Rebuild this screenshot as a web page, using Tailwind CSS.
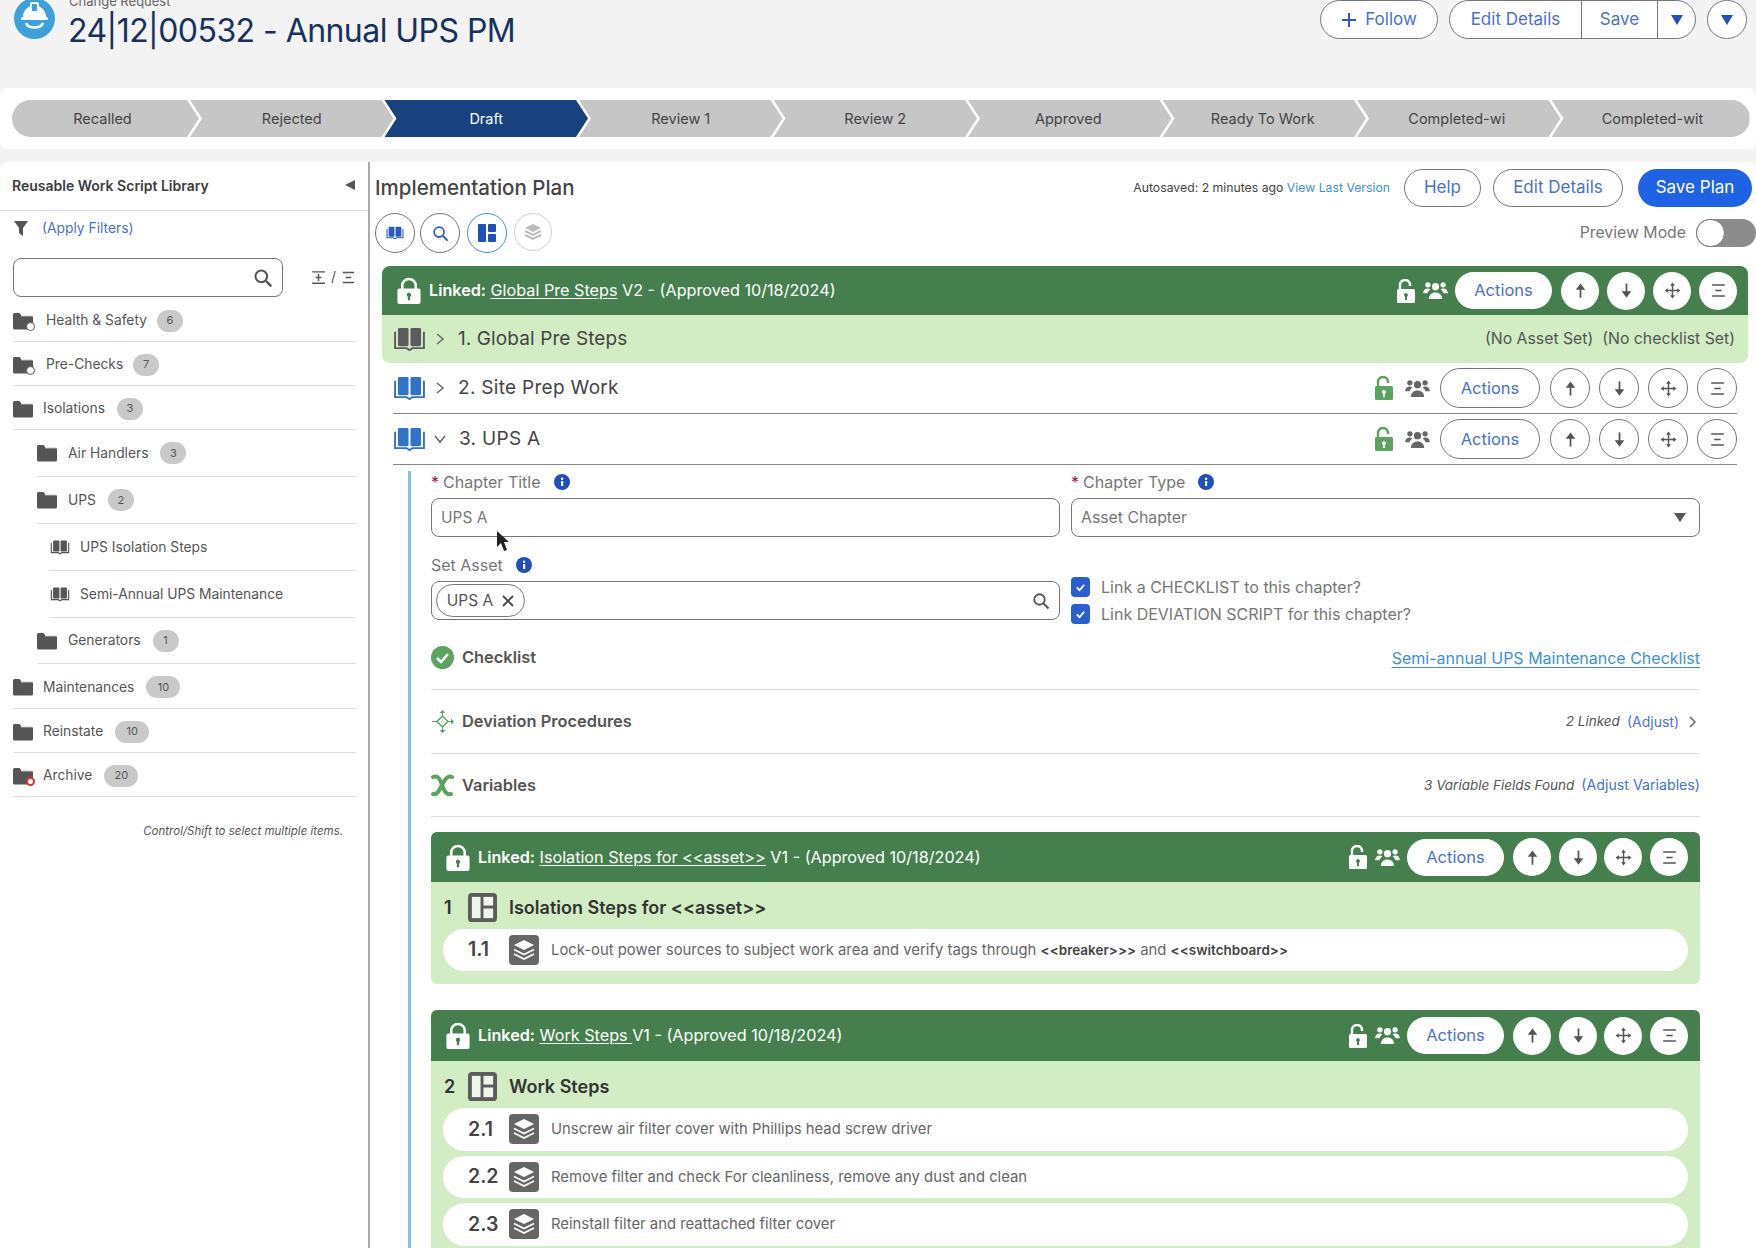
<!DOCTYPE html>
<html lang="en">
  <head>
    <meta charset="UTF-8" />
    <title>24|12|00532 - Annual UPS PM</title>
    <script src="https://cdn.jsdelivr.net/npm/@tailwindcss/browser@4"></script>
  </head>
  <body class="relative w-[1756px] h-[1248px] overflow-hidden bg-[#f3f3f3] font-[Inter,sans-serif] text-[#444]">
    <!-- shared icons -->
    <svg class="hidden">
      <symbol id="book" viewBox="0 0 34 26">
        <rect x="5" y="1" width="11" height="19" rx="1.5" fill="currentColor" />
        <rect x="18" y="1" width="11" height="19" rx="1.5" fill="currentColor" />
        <path d="M2 5v17h12l3 2 3-2h12V5" fill="none" stroke="currentColor" stroke-width="2" />
      </symbol>
      <symbol id="lock" viewBox="0 0 24 28">
        <path d="M5 13V9a7 7 0 0 1 14 0v4" fill="none" stroke="currentColor" stroke-width="2.600" />
        <path fill-rule="evenodd" fill="currentColor" d="M2 12h20a2 2 0 0 1 2 2v12a2 2 0 0 1-2 2H2a2 2 0 0 1-2-2V14a2 2 0 0 1 2-2zM12 16a2.400 2.400 0 0 0-1.200 4.400V24h2.400v-3.600A2.400 2.400 0 0 0 12 16z" />
      </symbol>
      <symbol id="unlock" viewBox="0 0 18 24">
        <path d="M3 11V6a5 5 0 0 1 10 0v1" fill="none" stroke="currentColor" stroke-width="2.400" />
        <path fill-rule="evenodd" fill="currentColor" d="M1.500 10h15a1.500 1.500 0 0 1 1.500 1.500v11a1.500 1.500 0 0 1-1.500 1.500h-15A1.500 1.500 0 0 1 0 22.500v-11A1.500 1.500 0 0 1 1.500 10zM9 14a2 2 0 0 0-1 3.700V21h2v-3.300A2 2 0 0 0 9 14z" />
      </symbol>
      <symbol id="people" viewBox="0 0 26 20">
        <circle cx="13" cy="6" r="3.800" fill="currentColor" />
        <path d="M6 19c0-4.500 3-7 7-7s7 2.500 7 7z" fill="currentColor" />
        <circle cx="5" cy="4" r="2.800" fill="currentColor" />
        <circle cx="21" cy="4" r="2.800" fill="currentColor" />
        <path d="M0 13c0-3 2-5 5-5 1 0 2 .3 2.600 1-1.500 1-2.600 2.300-3 4zM26 13c0-3-2-5-5-5-1 0-2 .3-2.600 1 1.500 1 2.600 2.300 3 4z" fill="currentColor" />
      </symbol>
      <symbol id="up" viewBox="0 0 24 24">
        <path d="M12 21V9" stroke="currentColor" stroke-width="2.200" />
        <path d="M12 3l6 8H6z" fill="currentColor" />
      </symbol>
      <symbol id="down" viewBox="0 0 24 24">
        <path d="M12 3v12" stroke="currentColor" stroke-width="2.200" />
        <path d="M12 21l-6-8h12z" fill="currentColor" />
      </symbol>
      <symbol id="move" viewBox="0 0 24 24">
        <path d="M12 4v16M4 12h16" stroke="currentColor" stroke-width="1.800" />
        <path d="M12 2l3 4H9zM12 22l-3-4h6zM2 12l4-3v6zM22 12l-4 3V9z" fill="currentColor" />
      </symbol>
      <symbol id="center" viewBox="0 0 24 24">
        <path d="M4 5h16M8 12h8M4 19h16" fill="none" stroke="currentColor" stroke-width="2" />
      </symbol>
      <symbol id="expand" viewBox="0 0 24 24">
        <path d="M3 4h18M3 20h18M8 12h8M12 7v10" fill="none" stroke="currentColor" stroke-width="2" />
      </symbol>
      <symbol id="search" viewBox="0 0 24 24">
        <circle cx="10" cy="10" r="7" fill="none" stroke="currentColor" stroke-width="2.400" />
        <path d="M15.500 15.500L22 22" stroke="currentColor" stroke-width="2.800" />
      </symbol>
      <symbol id="folder" viewBox="0 0 20 18">
        <path d="M1.500 1h5l2 2.500h10a1.500 1.500 0 0 1 1.500 1.500v11a1.500 1.500 0 0 1-1.500 1.500h-17A1.500 1.500 0 0 1 0 16V2.500A1.500 1.500 0 0 1 1.500 1z" fill="currentColor" />
        <path d="M8 3.800h12" stroke="#fff" stroke-width="1" />
      </symbol>
      <symbol id="info" viewBox="0 0 16 16">
        <circle cx="8" cy="8" r="8" fill="#1f4fb8" />
        <rect x="7" y="7" width="2.200" height="5" fill="#fff" />
        <circle cx="8.100" cy="4.800" r="1.200" fill="#fff" />
      </symbol>
      <symbol id="section" viewBox="0 0 30 30">
        <rect x="0" y="0" width="30" height="30" rx="4" fill="#5c5c5c" />
        <rect x="4" y="4" width="9" height="22" fill="#eef6e9" />
        <rect x="16" y="4" width="10" height="9" fill="#eef6e9" />
        <rect x="16" y="16" width="10" height="10" fill="#eef6e9" />
      </symbol>
      <symbol id="stack" viewBox="0 0 30 30">
        <rect x="0" y="0" width="30" height="30" rx="4" fill="#666" />
        <path d="M15 5l10 5-10 5-10-5z" fill="#fff" />
        <path d="M5 14.500l10 5 10-5M5 19l10 5 10-5" fill="none" stroke="#fff" stroke-width="1.800" />
      </symbol>
    </svg>

    <!-- record header -->
    <header class="h-[88px] flex justify-between pl-[14px] pr-[9px]">
      <div class="flex gap-[14px]">
        <svg class="w-[41px] h-[41px] -mt-[2px] shrink-0" viewBox="0 0 41 41">
          <circle cx="20.500" cy="20.500" r="20.500" fill="#3ca0db" />
          <path d="M9 19a11.500 11.500 0 0 1 23 0z" fill="#fff" />
          <rect x="17" y="5" width="7" height="9" rx="1" fill="#3ca0db" stroke="#fff" stroke-width="2" />
          <rect x="7" y="19" width="27" height="3" rx="1.500" fill="#fff" />
          <path d="M12 25c2 6 15 6 17 0" fill="none" stroke="#fff" stroke-width="2.500" />
        </svg>
        <div class="-mt-[8px]">
          <p class="text-[13px] leading-[18px] text-[#666]">Change Request</p>
          <h1 class="text-[32px] leading-[40px] mt-[1px] -ml-[1px] text-[#16325c] tracking-[-0.55px]">24|12|00532 - Annual UPS PM</h1>
        </div>
      </div>
      <div class="flex gap-[11px] text-[17px] text-[#4a72c8]">
        <button class="w-[118px] h-[39px] rounded-full border border-[#777] bg-white flex items-center justify-center gap-[8px]">
          <svg class="w-[16px] h-[16px]" viewBox="0 0 16 16"><path d="M8 1v14M1 8h14" stroke="#2a5bc2" stroke-width="2" /></svg>
          Follow
        </button>
        <div class="w-[247px] h-[39px] rounded-full border border-[#777] bg-white flex items-center overflow-hidden">
          <span class="w-[131px] text-center">Edit Details</span>
          <span class="w-[77px] h-full flex items-center justify-center border-x border-[#777]">Save</span>
          <span class="flex-1 flex justify-center"><svg class="w-[12px] h-[10px]" viewBox="0 0 12 10"><path d="M0 0h12L6 10z" fill="#1f4fb8" /></svg></span>
        </div>
        <button class="w-[40px] h-[39px] rounded-full border border-[#777] bg-white flex items-center justify-center">
          <svg class="w-[12px] h-[10px]" viewBox="0 0 12 10"><path d="M0 0h12L6 10z" fill="#1f4fb8" /></svg>
        </button>
      </div>
    </header>

    <!-- path -->
    <nav class="h-[61px] bg-white rounded-lg pl-[12px] pt-[12px] flex text-[14.5px]">
      <div class="w-[187px] h-[37px] pr-[6px] flex items-center justify-center bg-[#c6c6c6] rounded-l-full [clip-path:polygon(0_0,calc(100%-12px)_0,100%_50%,calc(100%-12px)_100%,0_100%)]">Recalled</div>
      <div class="w-[203.500px] -ml-[9px] h-[37px] flex items-center justify-center bg-[#c6c6c6] [clip-path:polygon(0_0,calc(100%-12px)_0,100%_50%,calc(100%-12px)_100%,0_100%,12px_50%)]">Rejected</div>
      <div class="w-[203.500px] -ml-[9px] h-[37px] flex items-center justify-center bg-[#17427f] text-white [clip-path:polygon(0_0,calc(100%-12px)_0,100%_50%,calc(100%-12px)_100%,0_100%,12px_50%)]">Draft</div>
      <div class="w-[203.500px] -ml-[9px] h-[37px] flex items-center justify-center bg-[#c6c6c6] [clip-path:polygon(0_0,calc(100%-12px)_0,100%_50%,calc(100%-12px)_100%,0_100%,12px_50%)]">Review 1</div>
      <div class="w-[203.500px] -ml-[9px] h-[37px] flex items-center justify-center bg-[#c6c6c6] [clip-path:polygon(0_0,calc(100%-12px)_0,100%_50%,calc(100%-12px)_100%,0_100%,12px_50%)]">Review 2</div>
      <div class="w-[203.500px] -ml-[9px] h-[37px] pr-[3px] flex items-center justify-center bg-[#c6c6c6] [clip-path:polygon(0_0,calc(100%-12px)_0,100%_50%,calc(100%-12px)_100%,0_100%,12px_50%)]">Approved</div>
      <div class="w-[203.500px] -ml-[9px] h-[37px] pr-[3px] flex items-center justify-center bg-[#c6c6c6] [clip-path:polygon(0_0,calc(100%-12px)_0,100%_50%,calc(100%-12px)_100%,0_100%,12px_50%)]">Ready To Work</div>
      <div class="w-[203.500px] -ml-[9px] h-[37px] pr-[4px] flex items-center justify-center bg-[#c6c6c6] [clip-path:polygon(0_0,calc(100%-12px)_0,100%_50%,calc(100%-12px)_100%,0_100%,12px_50%)]">Completed-wi</div>
      <div class="w-[198px] -ml-[9px] h-[37px] pl-[4px] flex items-center justify-center bg-[#c6c6c6] rounded-r-full [clip-path:polygon(0_0,100%_0,100%_100%,0_100%,12px_50%)]">Completed-wit</div>
    </nav>

    <main class="mt-[13px] h-[1086px] bg-white rounded-t-lg flex">
      <!-- library sidebar -->
      <aside class="w-[370px] shrink-0 border-r-2 border-[#aaa] text-[13.8px]">
        <div class="h-[49px] pb-[2px] flex items-center justify-between pl-[12px] pr-[13px] border-b border-[#ddd]">
          <h2 class="text-[14px] font-semibold text-[#3d3d3d]">Reusable Work Script Library</h2>
          <svg class="w-[10px] h-[10px]" viewBox="0 0 10 10"><path d="M10 0v10L0 5z" fill="#555" /></svg>
        </div>
        <div class="h-[34px] flex items-center pl-[13px] gap-[13px]">
          <svg class="w-[16px] h-[15px]" viewBox="0 0 14 15"><path d="M0 0h14L9 7v8L5 12V7z" fill="#555" /></svg>
          <span class="text-[#4a72c8]">(Apply Filters)</span>
        </div>
        <div class="mt-[13px] pl-[13px] pr-[11px] flex items-center justify-between">
          <div class="w-[270px] h-[39px] rounded-lg border border-[#777] flex items-center justify-end pr-[9px]">
            <svg class="w-[20px] h-[20px] text-[#555]"><use href="#search" /></svg>
          </div>
          <div class="flex items-center gap-[4px] text-[#555]">
            <svg class="w-[17px] h-[17px]"><use href="#expand" /></svg>
            <span>/</span>
            <svg class="w-[17px] h-[17px]"><use href="#center" /></svg>
          </div>
        </div>

        <ul class="mt-px text-[#555]">
          <li class="h-[44px] pt-[2px] ml-[13px] mr-[12px] border-b border-[#ddd] flex items-center">
            <span class="relative w-[20px] h-[18px] text-[#555]"><svg class="w-[20px] h-[18px]"><use href="#folder" /></svg><span class="absolute -right-[2px] -bottom-[1px] w-[9px] h-[9px] rounded-full bg-white border border-[#555]"></span></span>
            <span class="ml-[13px]">Health &amp; Safety</span>
            <span class="ml-[10px] w-[26px] h-[22px] rounded-full bg-[#c9c9c9] text-[11px] flex items-center justify-center">6</span>
          </li>
          <li class="h-[44px] pt-[2px] ml-[13px] mr-[12px] border-b border-[#ddd] flex items-center">
            <span class="relative w-[20px] h-[18px] text-[#555]"><svg class="w-[20px] h-[18px]"><use href="#folder" /></svg><span class="absolute -right-[2px] -bottom-[1px] w-[9px] h-[9px] rounded-full bg-white border border-[#555]"></span></span>
            <span class="ml-[13px]">Pre-Checks</span>
            <span class="ml-[10px] w-[26px] h-[22px] rounded-full bg-[#c9c9c9] text-[11px] flex items-center justify-center">7</span>
          </li>
          <li class="h-[44px] pt-[2px] ml-[13px] mr-[12px] border-b border-[#ddd] flex items-center">
            <svg class="w-[20px] h-[18px] text-[#555]"><use href="#folder" /></svg>
            <span class="ml-[10px]">Isolations</span>
            <span class="ml-[12px] w-[26px] h-[22px] rounded-full bg-[#c9c9c9] text-[11px] flex items-center justify-center">3</span>
          </li>
          <li class="h-[47px] ml-[37px] mr-[12px] border-b border-[#ddd] flex items-center">
            <svg class="w-[20px] h-[18px] text-[#555]"><use href="#folder" /></svg>
            <span class="ml-[11px]">Air Handlers</span>
            <span class="ml-[12px] w-[26px] h-[22px] rounded-full bg-[#c9c9c9] text-[11px] flex items-center justify-center">3</span>
          </li>
          <li class="h-[47px] ml-[37px] mr-[12px] border-b border-[#ddd] flex items-center">
            <svg class="w-[20px] h-[18px] text-[#555]"><use href="#folder" /></svg>
            <span class="ml-[11px]">UPS</span>
            <span class="ml-[12px] w-[26px] h-[22px] rounded-full bg-[#c9c9c9] text-[11px] flex items-center justify-center">2</span>
          </li>
          <li class="h-[47px] ml-[50px] mr-[12px] border-b border-[#ddd] flex items-center">
            <svg class="w-[20px] h-[15px] text-[#555]"><use href="#book" /></svg>
            <span class="ml-[10px]">UPS Isolation Steps</span>
          </li>
          <li class="h-[47px] ml-[50px] mr-[12px] border-b border-[#ddd] flex items-center">
            <svg class="w-[20px] h-[15px] text-[#555]"><use href="#book" /></svg>
            <span class="ml-[10px]">Semi-Annual UPS Maintenance</span>
          </li>
          <li class="h-[46px] ml-[37px] mr-[12px] border-b border-[#ddd] flex items-center">
            <svg class="w-[20px] h-[18px] text-[#555]"><use href="#folder" /></svg>
            <span class="ml-[11px]">Generators</span>
            <span class="ml-[12px] w-[26px] h-[22px] rounded-full bg-[#c9c9c9] text-[11px] flex items-center justify-center">1</span>
          </li>
          <li class="h-[45px] pt-[2px] ml-[13px] mr-[12px] border-b border-[#ddd] flex items-center">
            <svg class="w-[20px] h-[18px] text-[#555]"><use href="#folder" /></svg>
            <span class="ml-[10px]">Maintenances</span>
            <span class="ml-[12px] w-[34px] h-[22px] rounded-full bg-[#c9c9c9] text-[11px] flex items-center justify-center">10</span>
          </li>
          <li class="h-[44px] pt-[2px] ml-[13px] mr-[12px] border-b border-[#ddd] flex items-center">
            <svg class="w-[20px] h-[18px] text-[#555]"><use href="#folder" /></svg>
            <span class="ml-[10px]">Reinstate</span>
            <span class="ml-[12px] w-[34px] h-[22px] rounded-full bg-[#c9c9c9] text-[11px] flex items-center justify-center">10</span>
          </li>
          <li class="h-[44px] pt-[2px] ml-[13px] mr-[12px] border-b border-[#ddd] flex items-center">
            <span class="relative w-[20px] h-[18px] text-[#555]"><svg class="w-[20px] h-[18px]"><use href="#folder" /></svg><span class="absolute -right-[2px] -bottom-[1px] w-[9px] h-[9px] rounded-full bg-white border-2 border-[#d33]"></span></span>
            <span class="ml-[10px]">Archive</span>
            <span class="ml-[12px] w-[34px] h-[22px] rounded-full bg-[#c9c9c9] text-[11px] flex items-center justify-center">20</span>
          </li>
        </ul>
        <p class="mt-[26px] pr-[25px] text-right text-[11.500px] italic text-[#555]">Control/Shift to select multiple items.</p>
      </aside>

      <!-- implementation plan -->
      <section class="flex-1 min-w-0">
        <div class="mt-[7px] h-[38px] pl-[5px] pr-[4px] flex items-center">
          <h2 class="text-[20.500px] font-medium text-[#444]">Implementation Plan</h2>
          <span class="ml-auto text-[12.250px] text-[#444]">Autosaved: 2 minutes ago <span class="text-[#3f8fd6]">View Last Version</span></span>
          <button class="ml-[14px] w-[77px] h-[38px] pb-px rounded-full border border-[#777] text-[17px] text-[#4a72c8]">Help</button>
          <button class="ml-[12px] w-[130px] h-[38px] pb-px rounded-full border border-[#777] text-[17px] text-[#4a72c8]">Edit Details</button>
          <button class="ml-[15px] w-[114px] h-[38px] pb-px rounded-full bg-[#1f63e4] text-[17px] text-white">Save Plan</button>
        </div>
        <div class="mt-[6px] h-[40px] pl-[5px] flex items-center">
          <div class="flex gap-[5px]">
            <span class="w-[40px] h-[40px] rounded-full border border-[#777] flex items-center justify-center text-[#2a5bc2]"><svg class="w-[18px] h-[14px]"><use href="#book" /></svg></span>
            <span class="w-[40px] h-[40px] rounded-full border border-[#777] flex items-center justify-center text-[#2a5bc2]"><svg class="w-[17px] h-[17px]"><use href="#search" /></svg></span>
            <span class="ml-[2px] w-[40px] h-[40px] rounded-full border border-[#3f8fd6] flex items-center justify-center">
              <svg class="w-[18px] h-[18px]" viewBox="0 0 18 18"><rect width="8" height="18" rx="1" fill="#1f4fb8" /><rect x="10" width="8" height="8" rx="1" fill="#1f4fb8" /><rect x="10" y="10" width="8" height="8" rx="1" fill="#1f4fb8" /></svg>
            </span>
            <span class="ml-[2px] w-[38px] h-[38px] rounded-full border border-[#ccd] flex items-center justify-center">
              <svg class="w-[18px] h-[18px]" viewBox="0 0 18 18"><path d="M9 1l8 4-8 4-8-4z" fill="#bbb" /><path d="M1 8l8 4 8-4M1 12l8 4 8-4" fill="none" stroke="#bbb" stroke-width="2" /></svg>
            </span>
          </div>
          <div class="ml-auto flex items-center gap-[10px]">
            <span class="text-[15.800px] text-[#777]">Preview Mode</span>
            <span class="w-[60px] h-[28px] shrink-0 rounded-full bg-[#8c8c8c] flex items-center">
              <span class="w-[29px] h-[28px] rounded-full bg-white border border-[#777]"></span>
            </span>
          </div>
        </div>

        <!-- chapter 1 -->
        <div class="mt-[13px] ml-[12px] mr-[8px] rounded-lg overflow-hidden">
          <div class="h-[49px] bg-[#467f4e] flex items-center pl-[15px] pr-[11px] text-white">
            <svg class="w-[24px] h-[27px]"><use href="#lock" /></svg>
            <p class="ml-[8px] text-[16.200px]"><b class="font-semibold">Linked:</b> <span class="underline underline-offset-2">Global Pre Steps</span> V2 - (Approved 10/18/2024)</p>
            <svg class="ml-auto w-[18px] h-[24px]"><use href="#unlock" /></svg>
            <svg class="ml-[8px] w-[25px] h-[19px]"><use href="#people" /></svg>
            <span class="ml-[7px] w-[97px] h-[37px] rounded-full bg-white text-[#4a72c8] text-[16.500px] flex items-center justify-center">Actions</span>
            <span class="ml-[9px] w-[38px] h-[38px] rounded-full bg-white text-[#555] flex items-center justify-center"><svg class="w-[19px] h-[19px]"><use href="#up" /></svg></span>
            <span class="ml-[8px] w-[38px] h-[38px] rounded-full bg-white text-[#555] flex items-center justify-center"><svg class="w-[19px] h-[19px]"><use href="#down" /></svg></span>
            <span class="ml-[8px] w-[38px] h-[38px] rounded-full bg-white text-[#555] flex items-center justify-center"><svg class="w-[19px] h-[19px]"><use href="#move" /></svg></span>
            <span class="ml-[8px] w-[38px] h-[38px] rounded-full bg-white text-[#555] flex items-center justify-center"><svg class="w-[19px] h-[19px]"><use href="#center" /></svg></span>
          </div>
          <div class="h-[48px] bg-[#d2ecc4] flex items-center pl-[11px] pr-[13px]">
            <svg class="w-[33px] h-[25px] text-[#5c5c5c]"><use href="#book" /></svg>
            <svg class="ml-[9px] w-[10px] h-[12px]" viewBox="0 0 10 12"><path d="M2 1l6 5-6 5" fill="none" stroke="#666" stroke-width="1.500" /></svg>
            <span class="ml-[13px] text-[19px] tracking-[0.1px]">1. Global Pre Steps</span>
            <span class="ml-auto text-[15.800px] text-[#555]">(No Asset Set)</span>
            <span class="ml-[9px] text-[15.800px] text-[#555]">(No checklist Set)</span>
          </div>
        </div>

        <!-- chapter 2 -->
        <div class="h-[51px] ml-[23px] mr-[19px] border-b border-[#888] flex items-center">
          <svg class="w-[33px] h-[25px] text-[#2f74c8]"><use href="#book" /></svg>
          <svg class="ml-[9px] w-[10px] h-[12px]" viewBox="0 0 10 12"><path d="M2 1l6 5-6 5" fill="none" stroke="#666" stroke-width="1.500" /></svg>
          <span class="ml-[13px] text-[19px] tracking-[0.3px]">2. Site Prep Work</span>
          <svg class="ml-auto w-[18px] h-[24px] text-[#5ca35f]"><use href="#unlock" /></svg>
          <svg class="ml-[12px] w-[25px] h-[19px] text-[#666]"><use href="#people" /></svg>
          <span class="ml-[10px] w-[100px] h-[40px] rounded-full border border-[#777] text-[#4a72c8] text-[16.500px] flex items-center justify-center">Actions</span>
          <span class="ml-[10px] w-[40px] h-[40px] rounded-full border border-[#777] text-[#555] flex items-center justify-center"><svg class="w-[19px] h-[19px]"><use href="#up" /></svg></span>
          <span class="ml-[9px] w-[40px] h-[40px] rounded-full border border-[#777] text-[#555] flex items-center justify-center"><svg class="w-[19px] h-[19px]"><use href="#down" /></svg></span>
          <span class="ml-[9px] w-[40px] h-[40px] rounded-full border border-[#777] text-[#555] flex items-center justify-center"><svg class="w-[19px] h-[19px]"><use href="#move" /></svg></span>
          <span class="ml-[9px] w-[40px] h-[40px] rounded-full border border-[#777] text-[#555] flex items-center justify-center"><svg class="w-[19px] h-[19px]"><use href="#center" /></svg></span>
        </div>

        <!-- chapter 3 -->
        <div class="h-[51px] ml-[23px] mr-[19px] border-b border-[#888] flex items-center">
          <svg class="w-[33px] h-[25px] text-[#2f74c8]"><use href="#book" /></svg>
          <svg class="ml-[8px] w-[12px] h-[10px]" viewBox="0 0 12 10"><path d="M1 2l5 6 5-6" fill="none" stroke="#666" stroke-width="1.500" /></svg>
          <span class="ml-[13px] text-[19px] tracking-[0.3px]">3. UPS A</span>
          <svg class="ml-auto w-[18px] h-[24px] text-[#5ca35f]"><use href="#unlock" /></svg>
          <svg class="ml-[12px] w-[25px] h-[19px] text-[#666]"><use href="#people" /></svg>
          <span class="ml-[10px] w-[100px] h-[40px] rounded-full border border-[#777] text-[#4a72c8] text-[16.500px] flex items-center justify-center">Actions</span>
          <span class="ml-[10px] w-[40px] h-[40px] rounded-full border border-[#777] text-[#555] flex items-center justify-center"><svg class="w-[19px] h-[19px]"><use href="#up" /></svg></span>
          <span class="ml-[9px] w-[40px] h-[40px] rounded-full border border-[#777] text-[#555] flex items-center justify-center"><svg class="w-[19px] h-[19px]"><use href="#down" /></svg></span>
          <span class="ml-[9px] w-[40px] h-[40px] rounded-full border border-[#777] text-[#555] flex items-center justify-center"><svg class="w-[19px] h-[19px]"><use href="#move" /></svg></span>
          <span class="ml-[9px] w-[40px] h-[40px] rounded-full border border-[#777] text-[#555] flex items-center justify-center"><svg class="w-[19px] h-[19px]"><use href="#center" /></svg></span>
        </div>

        <div class="mt-[6px] ml-[38px] mr-[56px] pl-[20px] border-l-[3px] border-[#7fc4dc] h-[800px]">
          <div class="grid grid-cols-2 gap-x-[11px]">
            <div>
              <label class="h-[22px] flex items-center text-[16px] text-[#777]"><span class="text-[#a0174a] mr-[4px]">*</span>Chapter Title<svg class="ml-[13px] w-[16px] h-[16px]"><use href="#info" /></svg></label>
              <input class="mt-[5px] w-full h-[39px] rounded-lg border border-[#777] px-[9px] text-[15.500px] text-[#777]" value="UPS A" readonly />
            </div>
            <div>
              <label class="h-[22px] flex items-center text-[16px] text-[#777]"><span class="text-[#a0174a] mr-[4px]">*</span>Chapter Type<svg class="ml-[13px] w-[16px] h-[16px]"><use href="#info" /></svg></label>
              <div class="mt-[5px] h-[39px] rounded-lg border border-[#777] pl-[9px] pr-[13px] flex items-center justify-between text-[15.800px] text-[#777]">
                Asset Chapter
                <svg class="w-[12px] h-[9px]" viewBox="0 0 12 9"><path d="M0 0h12L6 9z" fill="#555" /></svg>
              </div>
            </div>
            <div class="mt-[17px]">
              <label class="h-[22px] flex items-center text-[16px] text-[#777]">Set Asset<svg class="ml-[13px] w-[16px] h-[16px]"><use href="#info" /></svg></label>
              <div class="mt-[5px] h-[39px] rounded-lg border border-[#777] pl-[4px] pr-[9px] flex items-center justify-between">
                <span class="w-[89px] h-[33px] rounded-full border border-[#777] flex items-center justify-center gap-[9px] text-[15.500px] text-[#555]">
                  UPS A
                  <svg class="w-[12px] h-[12px]" viewBox="0 0 12 12"><path d="M1 1l10 10M11 1L1 11" stroke="#444" stroke-width="1.800" /></svg>
                </span>
                <svg class="w-[18px] h-[18px] text-[#555]"><use href="#search" /></svg>
              </div>
            </div>
            <div class="mt-[40px] -mb-[5px] flex flex-col gap-[7px] text-[16px] text-[#777]">
              <div class="h-[20px] flex items-center gap-[11px]">
                <span class="w-[19px] h-[20px] rounded-[4px] bg-[#2a5fd0] flex items-center justify-center"><svg class="w-[11px] h-[11px]" viewBox="0 0 12 12"><path d="M2 6l3 3 5-6" fill="none" stroke="#fff" stroke-width="2" /></svg></span>
                Link a CHECKLIST to this chapter?
              </div>
              <div class="h-[20px] flex items-center gap-[11px]">
                <span class="w-[19px] h-[20px] rounded-[4px] bg-[#2a5fd0] flex items-center justify-center"><svg class="w-[11px] h-[11px]" viewBox="0 0 12 12"><path d="M2 6l3 3 5-6" fill="none" stroke="#fff" stroke-width="2" /></svg></span>
                Link DEVIATION SCRIPT for this chapter?
              </div>
            </div>
          </div>

          <div class="mt-[6px] h-[64px] flex items-center border-b border-[#ddd] text-[16px]">
            <svg class="w-[23px] h-[23px]" viewBox="0 0 23 23"><circle cx="11.500" cy="11.500" r="11.500" fill="#5ca35f" /><path d="M6 12l4 4 7-8" fill="none" stroke="#fff" stroke-width="2.500" /></svg>
            <span class="ml-[8px] text-[16.400px] font-semibold text-[#555]">Checklist</span>
            <span class="ml-auto underline underline-offset-3 text-[#3f8fd6]">Semi-annual UPS Maintenance Checklist</span>
          </div>
          <div class="h-[64px] flex items-center border-b border-[#ddd] text-[16px]">
            <svg class="w-[23px] h-[23px]" viewBox="0 0 23 23" fill="#5ca35f"><path d="M1 11.500h21M11.500 3v17" stroke="#5ca35f" stroke-width="1" fill="none" /><path d="M11.500 6l5.500 5.500-5.500 5.500-5.500-5.500z" fill="#fff" stroke="#5ca35f" stroke-width="1.500" /><path d="M11.500 0l3 3h-6zM11.500 23l-3-3h6zM23 11.500l-3 3v-6z" /></svg>
            <span class="ml-[8px] text-[16.400px] font-semibold text-[#555]">Deviation Procedures</span>
            <span class="ml-auto text-[13.500px] italic text-[#555]">2 Linked</span>
            <span class="ml-[7px] text-[14px] text-[#4a72c8]">(Adjust)</span>
            <svg class="ml-[9px] mr-[3px] w-[9px] h-[12px]" viewBox="0 0 9 12"><path d="M2 1l5 5-5 5" fill="none" stroke="#666" stroke-width="1.500" /></svg>
          </div>
          <div class="h-[63px] flex items-center border-b border-[#ddd] text-[16px]">
            <svg class="w-[23px] h-[23px]" viewBox="0 0 23 23"><path d="M2 3c5-2 7 2 9 8s4 10 9 9M21 3c-4-2-7 2-10 8S6 21 2 20" fill="none" stroke="#5ca35f" stroke-width="4" stroke-linecap="round" /></svg>
            <span class="ml-[8px] text-[16.400px] font-semibold text-[#555]">Variables</span>
            <span class="ml-auto text-[13.500px] italic text-[#555]">3 Variable Fields Found</span>
            <span class="ml-[7px] text-[14.200px] text-[#4a72c8]">(Adjust Variables)</span>
          </div>

          <!-- linked section: isolation -->
          <div class="mt-[15px] rounded-md overflow-hidden bg-[#d2ecc4] pb-[13px]">
            <div class="h-[50px] bg-[#467f4e] flex items-center pl-[15px] pr-[12px] text-white">
              <svg class="w-[24px] h-[27px]"><use href="#lock" /></svg>
              <p class="ml-[8px] text-[16.200px]"><b class="font-semibold">Linked:</b> <span class="underline underline-offset-2">Isolation Steps for &lt;&lt;asset&gt;&gt;</span> V1 - (Approved 10/18/2024)</p>
              <svg class="ml-auto w-[18px] h-[24px]"><use href="#unlock" /></svg>
              <svg class="ml-[8px] w-[25px] h-[19px]"><use href="#people" /></svg>
              <span class="ml-[7px] w-[97px] h-[37px] rounded-full bg-white text-[#4a72c8] text-[16.500px] flex items-center justify-center">Actions</span>
              <span class="ml-[9px] w-[38px] h-[38px] rounded-full bg-white text-[#555] flex items-center justify-center"><svg class="w-[19px] h-[19px]"><use href="#up" /></svg></span>
              <span class="ml-[8px] w-[38px] h-[38px] rounded-full bg-white text-[#555] flex items-center justify-center"><svg class="w-[19px] h-[19px]"><use href="#down" /></svg></span>
              <span class="ml-[7px] w-[38px] h-[38px] rounded-full bg-white text-[#555] flex items-center justify-center"><svg class="w-[19px] h-[19px]"><use href="#move" /></svg></span>
              <span class="ml-[8px] w-[38px] h-[38px] rounded-full bg-white text-[#555] flex items-center justify-center"><svg class="w-[19px] h-[19px]"><use href="#center" /></svg></span>
            </div>
            <div class="h-[47px] pt-[4px] flex items-center pl-[13px] text-[18px] font-semibold text-[#333]">
              <span class="w-[24px]">1</span>
              <svg class="w-[29px] h-[29px]"><use href="#section" /></svg>
              <span class="ml-[12px]">Isolation Steps for &lt;&lt;asset&gt;&gt;</span>
            </div>
            <div class="mx-[12px] h-[42px] rounded-full bg-white flex items-center pl-[25px] text-[14.850px] text-[#666]">
              <b class="w-[41px] text-[19.500px] font-semibold text-[#444]">1.1</b>
              <svg class="w-[30px] h-[30px]"><use href="#stack" /></svg>
              <span class="ml-[12px]">Lock-out power sources to subject work area and verify tags through <b class="text-[13.500px] font-semibold text-[#444]">&lt;&lt;breaker&gt;&gt;&gt;</b> and <b class="text-[13.500px] font-semibold text-[#444]">&lt;&lt;switchboard&gt;&gt;</b></span>
            </div>
          </div>

          <!-- linked section: work steps -->
          <div class="mt-[26px] rounded-md overflow-hidden bg-[#d2ecc4] pb-[12px]">
            <div class="h-[51px] bg-[#467f4e] flex items-center pl-[15px] pr-[12px] text-white">
              <svg class="w-[24px] h-[27px]"><use href="#lock" /></svg>
              <p class="ml-[8px] text-[16.200px]"><b class="font-semibold">Linked:</b> <span class="underline underline-offset-2">Work Steps </span>V1 - (Approved 10/18/2024)</p>
              <svg class="ml-auto w-[18px] h-[24px]"><use href="#unlock" /></svg>
              <svg class="ml-[8px] w-[25px] h-[19px]"><use href="#people" /></svg>
              <span class="ml-[7px] w-[97px] h-[37px] rounded-full bg-white text-[#4a72c8] text-[16.500px] flex items-center justify-center">Actions</span>
              <span class="ml-[9px] w-[38px] h-[38px] rounded-full bg-white text-[#555] flex items-center justify-center"><svg class="w-[19px] h-[19px]"><use href="#up" /></svg></span>
              <span class="ml-[8px] w-[38px] h-[38px] rounded-full bg-white text-[#555] flex items-center justify-center"><svg class="w-[19px] h-[19px]"><use href="#down" /></svg></span>
              <span class="ml-[7px] w-[38px] h-[38px] rounded-full bg-white text-[#555] flex items-center justify-center"><svg class="w-[19px] h-[19px]"><use href="#move" /></svg></span>
              <span class="ml-[8px] w-[38px] h-[38px] rounded-full bg-white text-[#555] flex items-center justify-center"><svg class="w-[19px] h-[19px]"><use href="#center" /></svg></span>
            </div>
            <div class="h-[47px] pt-[4px] flex items-center pl-[13px] text-[18px] font-semibold text-[#333]">
              <span class="w-[24px]">2</span>
              <svg class="w-[29px] h-[29px]"><use href="#section" /></svg>
              <span class="ml-[12px]">Work Steps</span>
            </div>
            <div class="flex flex-col gap-[5px]">
              <div class="mx-[12px] h-[42.500px] rounded-full bg-white flex items-center pl-[25px] text-[14.850px] text-[#666]">
                <b class="w-[41px] text-[19.500px] font-semibold text-[#444]">2.1</b>
                <svg class="w-[30px] h-[30px]"><use href="#stack" /></svg>
                <span class="ml-[12px]">Unscrew air filter cover with Phillips head screw driver</span>
              </div>
              <div class="mx-[12px] h-[42.500px] rounded-full bg-white flex items-center pl-[25px] text-[14.850px] text-[#666]">
                <b class="w-[41px] text-[19.500px] font-semibold text-[#444]">2.2</b>
                <svg class="w-[30px] h-[30px]"><use href="#stack" /></svg>
                <span class="ml-[12px]">Remove filter and check For cleanliness, remove any dust and clean</span>
              </div>
              <div class="mx-[12px] h-[42.500px] rounded-full bg-white flex items-center pl-[25px] text-[14.850px] text-[#666]">
                <b class="w-[41px] text-[19.500px] font-semibold text-[#444]">2.3</b>
                <svg class="w-[30px] h-[30px]"><use href="#stack" /></svg>
                <span class="ml-[12px]">Reinstall filter and reattached filter cover</span>
              </div>
            </div>
          </div>
        </div>
      </section>
    </main>

    <!-- mouse pointer from the recording -->
    <svg class="absolute left-[497px] top-[531px] w-[13px] h-[21px]" viewBox="0 0 13 21"><path d="M0 0l12 11H7l3 8-3 1-3-8-4 4z" fill="#222" /></svg>
  </body>
</html>
